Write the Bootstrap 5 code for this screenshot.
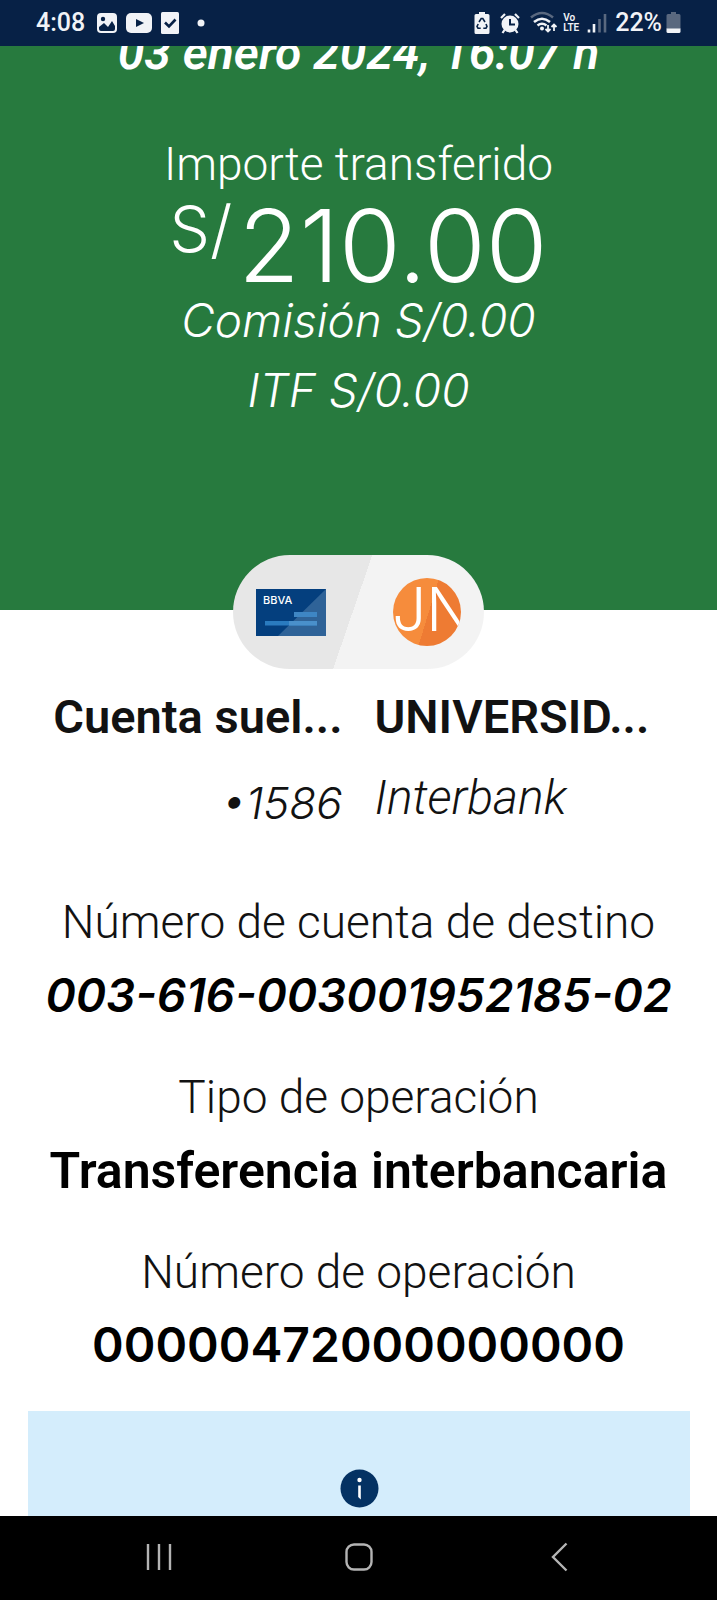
<!DOCTYPE html>
<html lang="es">
<head>
<meta charset="utf-8">
<meta name="viewport" content="width=device-width, initial-scale=1">
<title>Transferencia interbancaria</title>
<link href="https://cdn.jsdelivr.net/npm/bootstrap@5.3.0/dist/css/bootstrap.min.css" rel="stylesheet">
<style>
  body { font-family: Roboto, "Open Sans", sans-serif; color: #000; background: #fff; }
  svg { display: block; flex: none; }
  .status-bar { background: #072146; color: #f1f3f7; height: 46px; padding: 0 36px; font-size: 25px; font-weight: 500; line-height: 46px; z-index: 2; }
  .volte { font-size: 10px; line-height: 10px; font-weight: 600; }
  .num { font-family: Inter, Roboto, sans-serif; }
  .hero { background: #277a3e; padding-bottom: 180px; }
  .date { font-size: 48px; line-height: 72px; font-weight: 600; margin: -29px 0 37px; }
  .caption { font-size: 46px; line-height: 76px; font-weight: 300; }
  .amount { font-size: 100px; line-height: 88px; font-weight: 300; gap: 6px; }
  .currency { font-size: 64px; line-height: 54px; }
  .fee { font-size: 46px; line-height: 60px; font-weight: 300; margin-bottom: 10px; }
  .pill { width: 251px; height: 114px; margin-top: -55px; padding: 0 23px; border-radius: 57px; background: linear-gradient(109deg, #e7e7e7 0 48%, #f3f3f3 48%); }
  .initials { width: 68px; height: 68px; padding-left: 10px; font: 300 60px/62px Inter, sans-serif; color: #fff; background: linear-gradient(107deg, #f68c3c 0 52%, #ee7b33 52%); }
  .accounts { color: #121212; padding: 12px 0 42px; }
  .accounts > div { padding: 0 16px; }
  .acc-name { font-size: 47px; line-height: 72px; font-weight: 600; margin-bottom: 9px; }
  .acc-detail { font-size: 48px; line-height: 72px; font-weight: 300; }
  .acc-detail.num { font-size: 44px; line-height: 82px; }
  .detail { margin-bottom: 27px; }
  .detail dt { font-size: 46px; line-height: 72px; font-weight: 300; color: #121212; }
  .detail dd { font-size: 50px; line-height: 76px; font-weight: 600; margin: 0; }
  .detail dd.num { font-size: 48px; line-height: 74px; padding-bottom: 2px; }
  .detail dd.fst-italic { font-size: 46px; }
  .notice { background: #d4edfc; margin: 2px 27px 0 28px; padding-top: 58px; }
  .nav-bar { background: #000; height: 84px; padding: 0 57px 2px 59px; }
  .nav-bar button { flex: 1; border: 0; background: none; display: flex; justify-content: center; }
</style>
</head>
<body class="vh-100 d-flex flex-column overflow-hidden">

<header class="status-bar d-flex align-items-center flex-shrink-0">
  <span>4:08</span>
  <svg class="mx-2" width="25" height="24" viewBox="0 0 25 24"><rect x="4" y="2" width="20" height="20" rx="4" fill="#f1f3f7"/><circle cx="10" cy="8" r="2.200" fill="#072146"/><path d="M6 16l5-4 4 4 4-6 3 5v3q0 2-2 2H8q-2 0-2-2z" fill="#072146"/></svg>
  <svg width="26" height="20" viewBox="0 0 26 20"><rect width="26" height="20" rx="5" fill="#f1f3f7"/><path d="M10 6l8 4-8 4z" fill="#072146"/></svg>
  <svg class="ms-2" width="19" height="24" viewBox="0 0 19 24"><rect x="1" y="1" width="18" height="22" rx="1.500" fill="#f1f3f7"/><path d="M5 11.500l4 4 6.500-7" fill="none" stroke="#072146" stroke-width="2.600"/></svg>
  <svg class="ms-3" width="12" height="12" viewBox="0 0 12 12"><circle cx="6" cy="6" r="3.500" fill="#f1f3f7"/></svg>
  <svg class="ms-auto" width="16" height="24" viewBox="0 0 16 24"><path d="M5 1h6v2h3q1.500 0 1.500 1.500v17q0 1.500-1.500 1.500H2q-1.500 0-1.500-1.500v-17Q.5 3 2 3h3z" fill="#f1f3f7"/><path d="M5 11l2.200-3.500h1.600L11 11M12 13l1 2.500-1 1.700H9.300M6.700 17.200H4L3 15.500 4.200 13" fill="none" stroke="#072146" stroke-width="1.600"/></svg>
  <svg class="ms-2" width="24" height="24" viewBox="0 0 24 24"><circle cx="12" cy="13" r="8.500" fill="#f1f3f7"/><path d="M3 7l4-4M21 7l-4-4M6.500 19L4.500 22M17.500 19l2 3" stroke="#f1f3f7" stroke-width="2.200"/><path d="M12 8v5.500h5" fill="none" stroke="#072146" stroke-width="2"/></svg>
  <svg class="ms-2" width="29" height="24" viewBox="0 0 29 24"><path d="M1 6.500Q12 -2.500 23 6.500" fill="none" stroke="#59687f" stroke-width="2.600"/><path d="M4 11q8-6.500 16 0M7.500 14.500q4.500-3.500 9 0" fill="none" stroke="#f1f3f7" stroke-width="2.600"/><circle cx="12" cy="17.500" r="2" fill="#f1f3f7"/><path d="M18 14v6.500m-2.500-2.500l2.500 2.500 2.500-2.500M24 20v-6.500m-2.500 2.500l2.500-2.500 2.500 2.500" fill="none" stroke="#f1f3f7" stroke-width="1.800"/></svg>
  <span class="volte ms-1">Vo<br>LTE</span>
  <svg class="ms-2" width="20" height="24" viewBox="0 0 20 24"><path d="M2 21.500v-3M7 21.500V13" stroke="#f1f3f7" stroke-width="2.600"/><path d="M12.500 21.500V8M18 21.500V3" stroke="#59687f" stroke-width="2.600"/></svg>
  <span class="ms-2 me-1">22%</span>
  <svg width="15" height="24" viewBox="0 0 15 24"><path d="M5 1h5v2h3q1.500 0 1.500 1.500V18H.5V4.500Q.5 3 2 3h3z" fill="#59687f"/><path d="M.5 17.500h14v3q0 1.500-1.500 1.500H2q-1.500 0-1.500-1.500z" fill="#f1f3f7"/></svg>
</header>

<main class="flex-fill overflow-hidden text-center">
  <section class="hero text-white overflow-hidden">
    <p class="date fst-italic text-nowrap">03 enero 2024, 16:07 h</p>
    <p class="caption m-0">Importe transferido</p>
    <p class="amount num d-flex justify-content-center m-0"><span class="currency">S/</span><span>210.00</span></p>
    <p class="fee num fst-italic">Comisión S/0.00</p>
    <p class="fee num fst-italic">ITF S/0.00</p>
  </section>

  <div class="pill position-relative mx-auto d-flex align-items-center justify-content-between">
    <svg width="70" height="47" viewBox="0 0 70 47" role="img" aria-label="BBVA"><rect width="70" height="47" fill="#043f7e"/><path d="M22 47L70 0v47z" fill="#2f6398"/><path d="M38 23h23v5H38z" fill="#3e86c4"/><path d="M9 32h52v4.500H9z" fill="#2a7bbf"/><path d="M33 32h28v4.500H33z" fill="#4a90cb"/><text x="7" y="15" fill="#fff" font-family="Inter" font-size="11" font-weight="500">BBVA</text></svg>
    <div class="initials rounded-circle overflow-hidden d-flex justify-content-center">JN</div>
  </div>

  <div class="accounts row g-0">
    <div class="col-6 text-end">
      <div class="acc-name text-nowrap">Cuenta suel...</div>
      <div class="acc-detail num fst-italic">•1586</div>
    </div>
    <div class="col-6 text-start">
      <div class="acc-name text-nowrap">UNIVERSID...</div>
      <div class="acc-detail fst-italic">Interbank</div>
    </div>
  </div>

  <dl class="m-0">
    <div class="detail"><dt>Número de cuenta de destino</dt><dd class="num fst-italic">003-616-003001952185-02</dd></div>
    <div class="detail"><dt>Tipo de operación</dt><dd>Transferencia interbancaria</dd></div>
    <div class="detail"><dt>Número de operación</dt><dd class="num">00000472000000000</dd></div>
  </dl>

  <div class="notice h-100">
    <svg class="mx-auto" width="39" height="39" viewBox="0 0 39 39" role="img" aria-label="Información"><circle cx="19.500" cy="19.500" r="19" fill="#043263"/><circle cx="19.500" cy="11" r="2.200" fill="#fff"/><path d="M18.200 16.500h2.600v14L18.200 28z" fill="#fff"/></svg>
  </div>
</main>

<nav class="nav-bar d-flex align-items-center flex-shrink-0" aria-label="Sistema">
  <button type="button" aria-label="Recientes"><svg width="26" height="28" viewBox="0 0 26 28"><path d="M2 1v26M13 1v26M24 1v26" stroke="#b4b4b4" stroke-width="2.400"/></svg></button>
  <button type="button" aria-label="Inicio"><svg width="28" height="28" viewBox="0 0 28 28"><rect x="1.500" y="1.500" width="25" height="25" rx="7.500" fill="none" stroke="#b4b4b4" stroke-width="2.400"/></svg></button>
  <button type="button" aria-label="Atrás"><svg width="17" height="30" viewBox="0 0 17 30"><path d="M15.500 1.500L2 15l13.500 13.500" fill="none" stroke="#b4b4b4" stroke-width="2.400"/></svg></button>
</nav>

<script src="https://cdn.jsdelivr.net/npm/bootstrap@5.3.0/dist/js/bootstrap.bundle.min.js"></script>
</body>
</html>
